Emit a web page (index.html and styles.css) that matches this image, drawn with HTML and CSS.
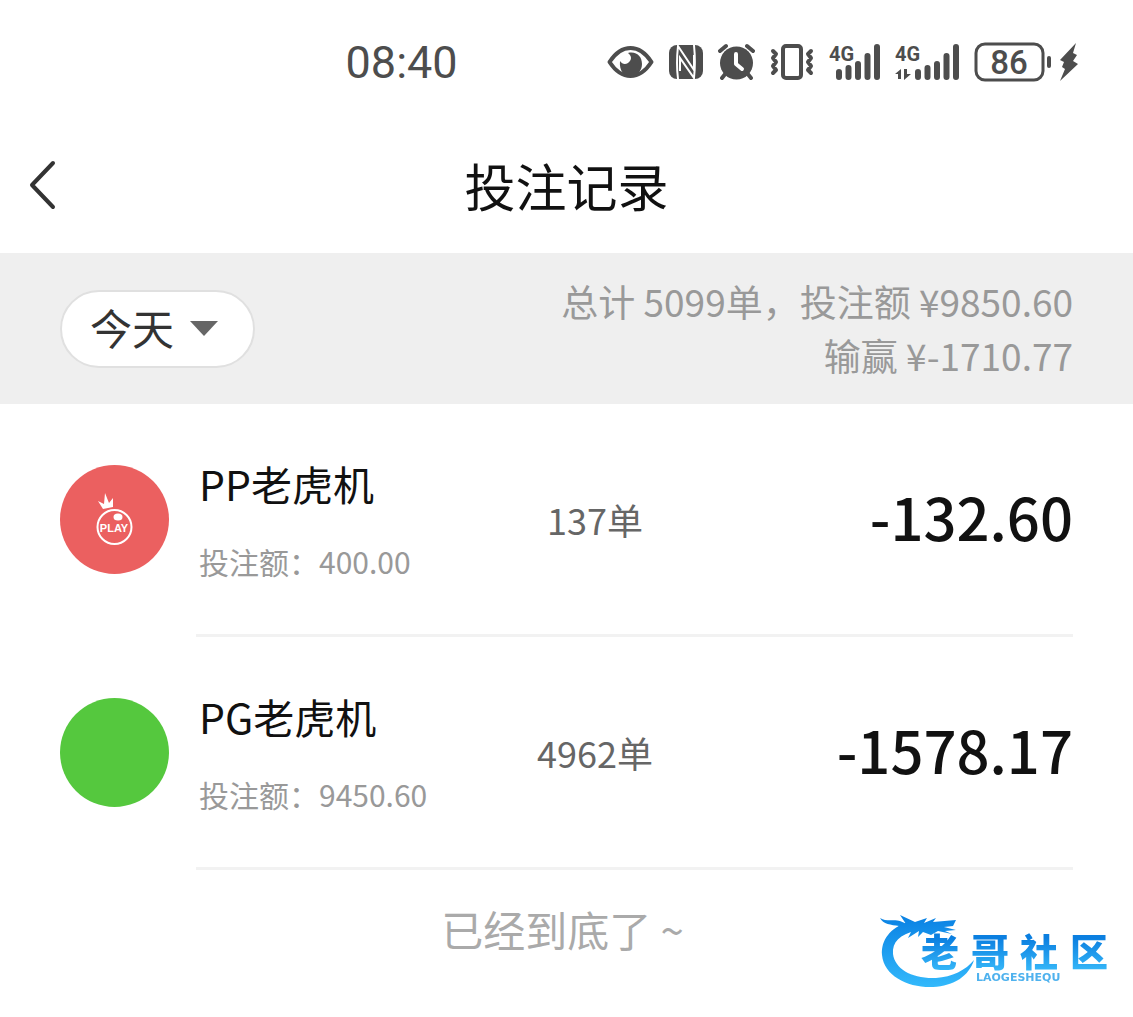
FILE: index.html
```html
<!DOCTYPE html>
<html lang="zh-CN">

<head>
    <meta charset="UTF-8">
    <meta name="viewport" content="width=device-width, initial-scale=1.0">
    <title>投注记录</title>
    <link rel="stylesheet" href="styles.css">
</head>

<body>
    <div class="status">
        <span class="time">08:40</span>
        <div class="status-icons">
            <svg width="47" height="38" viewBox="0 0 47 38">
                <path d="M2.5 19C9 9 16 5 23.500 5S38 9 44.500 19C38 29 31 33 23.500 33S9 29 2.500 19Z" fill="none" stroke="#4d4d4d" stroke-width="4" stroke-linejoin="round" />
                <path d="M21 10C30 8 35 14 35 21C35 28 30 33 24 33C17 33 12 28 13 18C15 21 18 22 21 20C25 17 25 13 21 10Z" />
            </svg>
            <svg width="34" height="38" viewBox="0 0 34 38">
                <rect y="2" width="34" height="34" rx="8" />
                <path d="M9 36C8 28 8 12 9 3L25 27V12M25 2C26 12 26 26 25 35L11 15V28" fill="none" stroke="#fff" stroke-width="2" />
            </svg>
            <svg width="37" height="38" viewBox="0 0 37 38">
                <circle cx="18.500" cy="20" r="16.500" />
                <path d="M2 8L8 3M35 8L29 3M8 30L4 35M29 30L33 35" fill="none" stroke="#4d4d4d" stroke-width="4" stroke-linecap="round" />
                <path d="M18 11V21L24 26" fill="none" stroke="#fff" stroke-width="4" stroke-linecap="round" stroke-linejoin="round" />
            </svg>
            <svg width="44" height="38" viewBox="0 0 44 38" class="line">
                <rect x="13" y="3" width="18" height="32" rx="3" stroke-width="4" />
                <path d="M3 8L6 11L3 15L6 19L3 23L6 27L3 30M41 8L38 11L41 15L38 19L41 23L38 27L41 30" stroke-width="4" />
            </svg>
            <svg width="51" height="38" viewBox="0 0 51 38">
                <text x="0" y="18" class="net">4G</text>
                <path d="M10 29V34M19.500 25V34M29 21V34M38.500 13V34M48 4V34" class="bars" />
            </svg>
            <svg width="64" height="38" viewBox="0 0 64 38">
                <text x="0" y="18" class="net">4G</text>
                <path d="M23 29V34M32.500 25V34M42 21V34M51.500 13V34M61 4V34" class="bars" />
                <path d="M0 31L6 26V36H3V31ZM9 26H12V31H16L9 37Z" />
            </svg>
            <svg width="104" height="40" viewBox="0 0 104 40">
                <rect x="2" y="2" width="67" height="36" rx="9" fill="none" stroke="#4d4d4d" stroke-width="3" />
                <rect x="73" y="14" width="4" height="12" rx="2" />
                <text x="35" y="32" class="battery">86</text>
                <path d="M102 1L86 18L90 20L88 25L91 27L86 39L104 22L99 19L103 13L99 11Z" />
            </svg>
        </div>
    </div>

    <header class="header">
        <button class="back" type="button" aria-label="返回">
            <svg width="28" height="50" viewBox="0 0 28 50">
                <path d="M25 3L4 25L25 47" fill="none" stroke="#333" stroke-width="4" stroke-linecap="round" stroke-linejoin="round" />
            </svg>
        </button>
        <h1>投注记录</h1>
    </header>

    <section class="summary">
        <label class="filter">
            <select name="date" aria-label="日期">
                <option>今天</option>
            </select>
            <svg width="30" height="17" viewBox="0 0 30 17">
                <path d="M1 1H29L15 16Z" fill="#666" />
            </svg>
        </label>
        <p class="total">总计 5099单，投注额 ¥9850.60<br>输赢 ¥-1710.77</p>
    </section>

    <main class="list">
        <div class="item">
            <svg class="logo" width="109" height="109" viewBox="0 0 109 109">
                <circle cx="54.500" cy="54.500" r="54.500" fill="#eb6060" />
                <circle cx="54.500" cy="62" r="17" fill="none" stroke="#fff" stroke-width="2" />
                <path d="M43 44L38 36L44 39L45 28L49 38L53 33L53 42Z" fill="#fff" />
                <ellipse cx="58" cy="52" rx="4.500" ry="3.500" fill="#fff" />
                <text x="54" y="67" class="play">PLAY</text>
            </svg>
            <div class="info">
                <div class="name">
                    <h2>PP老虎机</h2>
                    <p>投注额：400.00</p>
                </div>
                <span class="count">137单</span>
                <strong class="amount">-132.60</strong>
            </div>
        </div>
        <div class="item">
            <svg class="logo" width="109" height="109" viewBox="0 0 109 109">
                <circle cx="54.500" cy="54.500" r="54.500" fill="#55c83e" />
            </svg>
            <div class="info">
                <div class="name">
                    <h2>PG老虎机</h2>
                    <p>投注额：9450.60</p>
                </div>
                <span class="count">4962单</span>
                <strong class="amount">-1578.17</strong>
            </div>
        </div>
    </main>

    <p class="end">已经到底了 ~</p>

    <svg class="watermark" width="260" height="100" viewBox="0 0 260 100">
        <defs>
            <linearGradient id="blue" gradientUnits="userSpaceOnUse" x1="0" y1="18" x2="0" y2="86">
                <stop offset="0" stop-color="#0b83e4" />
                <stop offset="1" stop-color="#32b8fb" />
            </linearGradient>
            <linearGradient id="blueText" gradientUnits="userSpaceOnUse" x1="0" y1="38" x2="0" y2="70">
                <stop offset="0" stop-color="#0b7fe0" />
                <stop offset="1" stop-color="#35b6f8" />
            </linearGradient>
        </defs>
        <path fill="url(#blue)" d="M38 22C20 28 11 40 12 55C14 76 38 88 63 87C84 86 99 76 104 60C96 70 82 77 66 78C42 79 25 69 23 54C22 42 30 34 46 31Z" />
        <path fill="url(#blue)" d="M10 18C18 23 26 17 36 24L30 15L45 22L57 18L54 23L66 18L63 22L86 20L83 26L74 27L86 30L75 31L82 34L68 31L61 35L53 32L48 37L49 31L38 38L42 30L34 33L36 28L25 31L29 26C21 25 13 24 10 18Z" />
        <g fill="url(#blueText)">
            <text x="51" y="66" class="brand">老</text>
            <text x="101" y="66" class="brand">哥</text>
            <text x="150" y="66" class="brand">社</text>
            <text x="200" y="66" class="brand">区</text>
        </g>
        <text x="106" y="81" class="brand-sub">LAOGESHEQU</text>
    </svg>
</body>

</html>
```

FILE: styles.css
```css
* {
    box-sizing: border-box;
}

body {
    margin: 0;
    background: #fff;
    color: #111;
    font-family: "Noto Sans CJK SC", sans-serif;
}

h1,
h2,
p {
    margin: 0;
    font-weight: 400;
}

.status {
    display: flex;
    justify-content: space-between;
    align-items: center;
    height: 124px;
    padding: 0 55px 0 30.5%;
    color: #4d4d4d;
}

.time {
    font-family: Roboto, sans-serif;
    font-size: 45px;
}

.status-icons {
    display: flex;
    align-items: center;
    gap: 15px;
    fill: #4d4d4d;
}

.line {
    fill: none;
    stroke: #4d4d4d;
    stroke-linecap: round;
    stroke-linejoin: round;
}

.bars {
    fill: none;
    stroke: #4d4d4d;
    stroke-width: 6px;
    stroke-linecap: round;
}

.net {
    font: 700 20px Roboto, sans-serif;
}

.battery {
    font: 500 33px Roboto, sans-serif;
    text-anchor: middle;
}

.header {
    display: grid;
    grid-template-columns: 60px 1fr 60px;
    align-items: center;
    height: 129px;
    padding: 0 28px 8px;
}

.header h1 {
    font-size: 51px;
    line-height: 60px;
    text-align: center;
}

.back {
    display: flex;
    padding: 0;
    border: 0;
    background: none;
}

.summary {
    display: flex;
    justify-content: space-between;
    align-items: center;
    height: 151px;
    padding: 0 60px;
    background: #efefef;
}

.filter {
    display: flex;
    align-items: center;
    gap: 14px;
    height: 78px;
    padding: 0 34px 0 28px;
    border: 2px solid #e0e0e0;
    border-radius: 39px;
    background: #fff;
}

.filter select {
    appearance: none;
    padding: 0 0 4px;
    border: 0;
    background: none;
    color: #333;
    font: 42px "Noto Sans CJK SC", sans-serif;
}

.total {
    padding-bottom: 2px;
    color: #999;
    font-size: 37px;
    line-height: 54px;
    text-align: right;
}

.list {
    padding: 0 60px;
}

.item {
    display: flex;
    align-items: center;
    gap: 27px;
}

.logo {
    flex: none;
    margin-bottom: 3px;
}

.play {
    fill: #fff;
    font: 700 11px "Liberation Sans", sans-serif;
    text-anchor: middle;
}

.info {
    flex: 1;
    display: grid;
    grid-template-columns: 34% 23% 43%;
    align-items: center;
    height: 233px;
    border-bottom: 3px solid #f2f2f2;
}

.name {
    padding: 0 0 2px 3px;
}

.name h2 {
    font-size: 41px;
    line-height: 60px;
}

.name p {
    margin-top: 26px;
    color: #999;
    font-size: 30px;
    line-height: 44px;
}

.count {
    color: #666;
    font-size: 36px;
    text-align: center;
}

.amount {
    font-size: 58px;
    font-weight: 500;
    line-height: 80px;
    padding-bottom: 6px;
    text-align: right;
}

.end {
    padding: 27px 8px 30px 0;
    color: #aaa;
    font-size: 42px;
    line-height: 64px;
    text-align: center;
}

.watermark {
    position: fixed;
    right: 3px;
    bottom: 17px;
}

.brand {
    font: 900 38px "Noto Sans CJK SC", sans-serif;
}

.brand-sub {
    fill: #4fb2ee;
    font: 700 11px "DejaVu Sans", sans-serif;
}
```
